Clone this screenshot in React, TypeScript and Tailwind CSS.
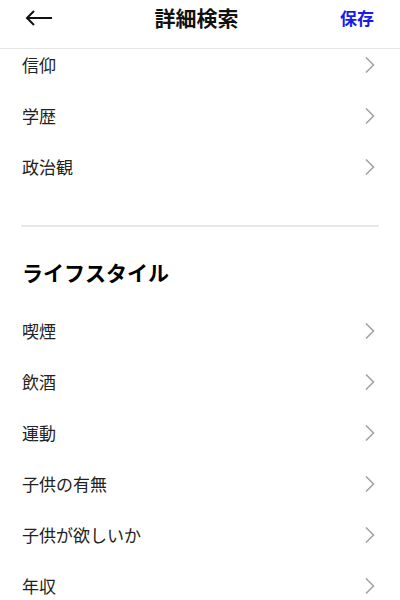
const basics = ["信仰", "学歴", "政治観"];
const lifestyle = ["喫煙", "飲酒", "運動", "子供の有無", "子供が欲しいか", "年収"];

function Chevron() {
  return (
    <svg width="12" height="18" viewBox="0 0 12 18" fill="none">
      <path d="M2 1.5 L9.5 9 L2 16.5" stroke="#a3a3a3" strokeWidth="1.6" />
    </svg>
  );
}

function Row({ label }: { label: string }) {
  return (
    <div className="flex h-[51px] items-center justify-between pl-[22px] pr-[24px]">
      <span className="text-[17px] text-[#222]">{label}</span>
      <Chevron />
    </div>
  );
}

export default function App() {
  return (
    <div
      className="h-[600px] w-[400px] overflow-hidden bg-white"
      style={{ fontFamily: '"Noto Sans CJK JP", "Noto Sans", sans-serif' }}
    >
      <header className="relative z-10 h-[49px] border-b border-[#e6e6e6] bg-white">
        <div className="flex h-[36px] items-center justify-between pl-[25px] pr-[26px]">
          <svg width="28" height="16" viewBox="0 0 28 16" fill="none">
            <path d="M27 8 H2 M9 1 L2 8 L9 15" stroke="#111" strokeWidth="2" />
          </svg>
          <h1 className="text-[21px] font-bold text-[#111]">詳細検索</h1>
          <button className="text-[17px] font-bold text-[#1a1aef]">保存</button>
        </div>
      </header>
      <main className="-mt-[10px]">
        {basics.map((l) => (
          <Row key={l} label={l} />
        ))}
        <div className="mx-[21px] mt-[33px] border-t-2 border-[#e8e8e8]" />
        <h2 className="mt-[30px] mb-[18px] px-[22px] text-[21px] font-bold leading-[30px] text-black">
          ライフスタイル
        </h2>
        {lifestyle.map((l) => (
          <Row key={l} label={l} />
        ))}
      </main>
    </div>
  );
}
